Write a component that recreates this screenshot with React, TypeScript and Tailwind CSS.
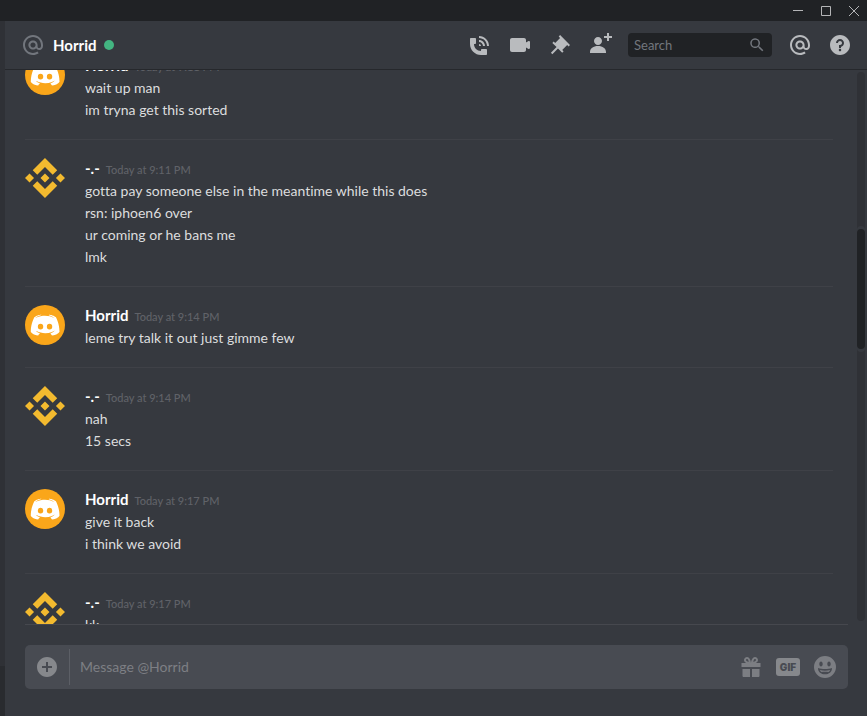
import type { ReactNode } from "react";

const AT_PATH =
  "M12 2C6.486 2 2 6.486 2 12C2 17.515 6.486 22 12 22C14.039 22 15.993 21.398 17.652 20.259L16.521 18.611C15.195 19.519 13.633 20 12 20C7.589 20 4 16.411 4 12C4 7.589 7.589 4 12 4C16.411 4 20 7.589 20 12V12.782C20 14.17 19.402 15 18.4 15L18.398 15.018C18.338 15.005 18.273 15 18.209 15H18C17.437 15 16.6 14.182 16.6 13.631V12C16.6 9.464 14.537 7.4 12 7.4C9.463 7.4 7.4 9.463 7.4 12C7.4 14.537 9.463 16.6 12 16.6C13.234 16.6 14.35 16.106 15.177 15.313C15.826 16.269 16.93 17 18 17L18.002 16.981C18.064 16.994 18.129 17 18.195 17H18.4C20.552 17 22 15.306 22 12.782V12C22 6.486 17.514 2 12 2ZM12 14.599C10.566 14.599 9.4 13.433 9.4 11.999C9.4 10.565 10.566 9.399 12 9.399C13.434 9.399 14.6 10.565 14.6 11.999C14.6 13.433 13.434 14.599 12 14.599Z";
const CALL_PATH =
  "M11 5V3C16.515 3 21 7.486 21 13H19C19 8.589 15.411 5 11 5ZM17 13H15C15 10.795 13.206 9 11 9V7C14.309 7 17 9.691 17 13ZM11 11V13H13C13 11.896 12.105 11 11 11ZM14 16H18C18.553 16 19 16.447 19 17V21C19 21.553 18.553 22 18 22H13C6.925 22 2 17.075 2 11V6C2 5.447 2.448 5 3 5H7C7.553 5 8 5.447 8 6V10C8 10.553 7.553 11 7 11H6C6.063 14.938 9 18 13 18V17C13 16.447 13.447 16 14 16Z";
const VIDEO_PATH =
  "M21.526 8.149C21.231 7.966 20.862 7.951 20.553 8.105L18 9.382V7C18 5.897 17.103 5 16 5H4C2.897 5 2 5.897 2 7V17C2 18.104 2.897 19 4 19H16C17.103 19 18 18.104 18 17V14.618L20.553 15.894C20.694 15.965 20.847 16 21 16C21.183 16 21.365 15.949 21.526 15.851C21.82 15.668 22 15.347 22 15V9C22 8.653 21.82 8.332 21.526 8.149Z";
const PIN_PATH =
  "M22 12L12.101 2.101L10.686 3.514L12.101 4.929L7.151 9.878V9.88L5.736 8.465L4.322 9.88L8.565 14.122L2.908 19.778L4.322 21.192L9.979 15.536L14.222 19.778L15.636 18.364L14.222 16.95L19.171 12H19.172L20.586 13.414L22 12Z";
const ADD_PATH =
  "M21 3H24V5H21V8H19V5H16V3H19V0H21V3ZM10 12C12.205 12 14 10.205 14 8C14 5.795 12.205 4 10 4C7.795 4 6 5.795 6 8C6 10.205 7.795 12 10 12ZM10 13C5.289 13 2 15.467 2 19V20H18V19C18 15.467 14.711 13 10 13Z";
const HELP_PATH =
  "M12 2C6.486 2 2 6.487 2 12C2 17.515 6.486 22 12 22C17.514 22 22 17.515 22 12C22 6.487 17.514 2 12 2ZM12 18.25C11.31 18.25 10.75 17.691 10.75 17C10.75 16.31 11.31 15.75 12 15.75C12.69 15.75 13.25 16.31 13.25 17C13.25 17.691 12.69 18.25 12 18.25ZM13 13.875V15H11V12H12C13.104 12 14 11.103 14 10C14 8.896 13.104 8 12 8C10.896 8 10 8.896 10 10H8C8 7.795 9.795 6 12 6C14.205 6 16 7.795 16 10C16 11.861 14.723 13.429 13 13.875Z";
const PLUS_PATH =
  "M12 2C6.486 2 2 6.486 2 12C2 17.514 6.486 22 12 22C17.514 22 22 17.514 22 12C22 6.486 17.514 2 12 2ZM17 13H13V17H11V13H7V11H11V7H13V11H17V13Z";
const GIFT_PATH =
  "M16.886 8H21.5V12H2.5V8H7.114C6.663 7.764 6.236 7.477 5.879 7.121C4.709 5.951 4.709 4.048 5.879 2.879C7.012 1.746 8.986 1.746 10.121 2.877C11.758 4.514 11.979 7.595 11.998 7.941H12.002C12.022 7.596 12.242 4.515 13.879 2.878C15.014 1.745 16.986 1.746 18.121 2.877C19.29 4.049 19.29 5.952 18.121 7.121C17.764 7.477 17.337 7.764 16.886 8ZM7.293 5.707C6.903 5.316 6.903 4.682 7.293 4.292C7.481 4.103 7.732 4 8 4C8.268 4 8.519 4.103 8.707 4.292C9.297 4.882 9.641 5.94 9.825 6.822C8.945 6.639 7.879 6.293 7.293 5.707ZM14.174 6.824C14.359 5.941 14.702 4.883 15.293 4.293C15.481 4.103 15.732 4 16 4C16.268 4 16.519 4.103 16.706 4.291C17.096 4.682 17.097 5.316 16.707 5.707C16.116 6.298 15.057 6.642 14.174 6.824ZM3.5 14V21C3.5 21.5 4 22 4.5 22H11V14H3.5ZM13 14V22H19.5C20 22 20.5 21.5 20.5 21V14H13Z";
const SMILE_PATH =
  "M12 1A11 11 0 1 0 12 23A11 11 0 1 0 12 1ZM8 6.5C9 6.5 9.7 7.5 9.7 9S9 11.5 8 11.5S6.3 10.5 6.3 9S7 6.5 8 6.5ZM16 6.5C17 6.5 17.7 7.5 17.7 9S17 11.5 16 11.5S14.3 10.5 14.3 9S15 6.5 16 6.5ZM5 13C7 13.7 9.5 14 12 14S17 13.7 19 13C19 17 16 19.3 12 19.3S5 17 5 13ZM6.8 15C8.3 15.6 10 15.8 12 15.8S15.7 15.6 17.2 15C16.8 16 16.2 16.6 15.5 17C13.3 16.6 10.7 16.6 8.5 17C7.8 16.6 7.2 16 6.8 15Z";
const SEARCH_PATH =
  "M15.5 14H14.71L14.43 13.73A6.5 6.5 0 1 0 13.73 14.43L14 14.71V15.5L19 20.49L20.49 19L15.5 14ZM9.5 14A4.5 4.5 0 1 1 9.5 5A4.5 4.5 0 0 1 9.5 14Z";

function Icon({ path, className = "size-6" }: { path: string; className?: string }) {
  return (
    <svg viewBox="0 0 24 24" fill="currentColor" fillRule="evenodd" aria-hidden="true" className={`shrink-0 ${className}`}>
      <path d={path} />
    </svg>
  );
}

function IconButton({ label, children }: { label: string; children: ReactNode }) {
  return (
    <button type="button" aria-label={label} className="flex shrink-0 items-center justify-center">
      {children}
    </button>
  );
}

function HorridAvatar() {
  return (
    <svg viewBox="16 18 416 416" className="size-10 shrink-0 rounded-full bg-[#faa61a]" aria-hidden="true">
      <path
        fill="#fff"
        d="M375.04 295.424c0-82.432-36.864-149.248-36.864-149.248-36.864-27.648-71.936-26.88-71.936-26.88l-3.584 4.096c43.52 13.312 63.744 32.512 63.744 32.512-60.811-33.329-132.244-33.335-191.232-7.424-9.472 4.352-15.104 7.424-15.104 7.424s21.248-20.224 67.328-33.536l-2.56-3.072s-35.072-.768-71.936 26.88c0 0-36.864 66.816-36.864 149.248 0 0 21.504 37.12 78.08 38.912 0 0 9.472-11.52 17.152-21.248-32.512-9.728-44.8-30.208-44.8-30.208 3.766 2.636 9.976 6.053 10.496 6.4 43.21 24.198 104.588 32.126 159.744 8.96 8.96-3.328 18.944-8.192 29.44-15.104 0 0-12.8 20.992-46.336 30.464 7.68 9.728 16.896 20.736 16.896 20.736 56.576-1.792 78.336-38.912 78.336-38.912z"
      />
      <ellipse cx="177.6" cy="243.2" rx="28" ry="29" fill="#faa61a" />
      <ellipse cx="271.1" cy="243.2" rx="28" ry="29" fill="#faa61a" />
    </svg>
  );
}

function DiamondAvatar() {
  return (
    <svg viewBox="0 0 24 24" fill="#f3ba2f" className="size-10 shrink-0" aria-hidden="true">
      <path d="M16.624 13.9202l2.7175 2.7154-7.353 7.353-7.353-7.352 2.7175-2.7164 4.6355 4.6595 4.6356-4.6595zm4.6366-4.6366L24 12l-2.7154 2.7164L18.5682 12l2.6924-2.7164zm-9.272.001l2.7163 2.6914-2.7164 2.7174v-.001L9.2721 12l2.7164-2.7154zm-9.2722-.001L5.4088 12l-2.6914 2.6924L0 12l2.7164-2.7164zM11.9885.0115l7.353 7.329-2.7174 2.7154-4.6356-4.6356-4.6355 4.6595-2.7174-2.7154 7.353-7.353z" />
    </svg>
  );
}

type Group = { author: "Horrid" | "-.-"; time: string; lines: string[] };

const groups: Group[] = [
  { author: "Horrid", time: "Today at 9:11 PM", lines: ["wait up man", "im tryna get this sorted"] },
  {
    author: "-.-",
    time: "Today at 9:11 PM",
    lines: ["gotta pay someone else in the meantime while this does", "rsn: iphoen6 over", "ur coming or he bans me", "lmk"],
  },
  { author: "Horrid", time: "Today at 9:14 PM", lines: ["leme try talk it out just gimme few"] },
  { author: "-.-", time: "Today at 9:14 PM", lines: ["nah", "15 secs"] },
  { author: "Horrid", time: "Today at 9:17 PM", lines: ["give it back", "i think we avoid"] },
  { author: "-.-", time: "Today at 9:17 PM", lines: ["kk"] },
];

function MessageGroup({ author, time, lines }: Group) {
  return (
    <li className="flex gap-5 border-b border-[#3f4147] py-[18px]">
      {author === "Horrid" ? <HorridAvatar /> : <DiamondAvatar />}
      <div className="min-w-0">
        <h2 className="flex h-[22px] items-baseline gap-[6px]">
          <span className="text-[15px] leading-5 font-bold text-white">{author}</span>
          <time className="text-[11px] leading-5 font-medium text-[#606268]">{time}</time>
        </h2>
        {lines.map((line) => (
          <p key={line} className="text-sm leading-[22px] text-[#dcddde]">
            {line}
          </p>
        ))}
      </div>
    </li>
  );
}

export default function App() {
  return (
    <div className="flex h-screen flex-col overflow-hidden bg-[#36393f] font-[Lato,sans-serif] [font-variant-ligatures:none]">
      <div className="flex h-[21px] shrink-0 items-center justify-end gap-[18px] bg-[#202225] pr-2 text-[#b4b5b7]">
        <button type="button" aria-label="Minimize">
          <svg viewBox="0 0 10 10" className="size-[10px]" stroke="currentColor" fill="none">
            <path d="M0 4.5H10" />
          </svg>
        </button>
        <button type="button" aria-label="Maximize">
          <svg viewBox="0 0 10 10" className="size-[10px]" stroke="currentColor" fill="none">
            <path d="M.5 .5H9.5V9.5H.5Z" />
          </svg>
        </button>
        <button type="button" aria-label="Close">
          <svg viewBox="0 0 10 10" className="size-[10px]" stroke="currentColor" fill="none">
            <path d="M0 0L10 10M10 0L0 10" />
          </svg>
        </button>
      </div>

      <div className="flex min-h-0 flex-1">
        <div className="flex w-[5px] shrink-0 flex-col bg-[#2f3136]">
          <div className="mt-auto h-[50px] bg-[#292b2f]" />
        </div>

        <main className="flex min-w-0 flex-1 flex-col">
          <header className="flex h-[49px] shrink-0 items-center border-b border-[#26282c] pr-[15px] pl-4 text-[#b9bbbe]">
            <Icon path={AT_PATH} className="size-6 text-[#72767d]" />
            <h1 className="ml-2 text-[15px] leading-5 font-bold text-white">Horrid</h1>
            <span className="ml-2 size-[10px] rounded-full bg-[#43b581]" role="img" aria-label="Online" />
            <div className="ml-auto flex items-center gap-4">
              <IconButton label="Start voice call"><Icon path={CALL_PATH} /></IconButton>
              <IconButton label="Start video call"><Icon path={VIDEO_PATH} /></IconButton>
              <IconButton label="Pinned messages"><Icon path={PIN_PATH} /></IconButton>
              <IconButton label="Add friends"><Icon path={ADD_PATH} /></IconButton>
              <label className="flex h-6 w-36 items-center rounded bg-[#202225] px-[6px] text-[#72767d]">
                <input
                  type="text"
                  aria-label="Search"
                  placeholder="Search"
                  className="min-w-0 flex-1 bg-transparent text-[13px] leading-5 outline-none placeholder:text-[#72767d]"
                />
                <Icon path={SEARCH_PATH} className="size-[18px]" />
              </label>
              <IconButton label="Mentions"><Icon path={AT_PATH} /></IconButton>
              <IconButton label="Help"><Icon path={HELP_PATH} /></IconButton>
            </div>
          </header>

          <div className="flex min-h-0 flex-1">
            <div className="min-w-0 flex-1 overflow-hidden pr-6 pl-5">
              <ol className="-mt-[33px]">
                {groups.map((group, index) => (
                  <MessageGroup key={index} {...group} />
                ))}
              </ol>
            </div>
            <div className="mt-[2px] mr-[2px] mb-[3px] w-2 shrink-0 rounded-full bg-[#2f3136]">
              <div className="mt-[154px] h-[126px] rounded-full border-y-[3px] border-[#36393f] bg-[#36393f]">
                <div className="h-full rounded-full bg-[#202225]" />
              </div>
            </div>
          </div>

          <form className="mr-[19px] ml-5 shrink-0 border-t border-[#46484e] pt-5 pb-[27px]">
            <div className="flex h-11 items-center rounded-[5px] bg-[#484b52] pr-[11px] pl-[10px] text-[#86888c]">
              <IconButton label="Upload a file"><Icon path={PLUS_PATH} /></IconButton>
              <span className="ml-[10px] h-9 w-px bg-[#5c5f66]" />
              <input
                type="text"
                aria-label="Message @Horrid"
                placeholder="Message @Horrid"
                className="ml-[10px] min-w-0 flex-1 bg-transparent text-sm leading-[22px] outline-none placeholder:text-[#7d7f84]"
              />
              <div className="flex items-center gap-[13px] text-[#7c7e83]">
                <IconButton label="Send a gift"><Icon path={GIFT_PATH} /></IconButton>
                <button
                  type="button"
                  className="flex h-[18px] w-6 items-center justify-center rounded-[3px] bg-[#86888c] font-[Inter,sans-serif] text-[10px] leading-none font-black text-[#484b52]"
                >
                  GIF
                </button>
                <IconButton label="Select emoji"><Icon path={SMILE_PATH} /></IconButton>
              </div>
            </div>
          </form>
        </main>
      </div>
    </div>
  );
}
